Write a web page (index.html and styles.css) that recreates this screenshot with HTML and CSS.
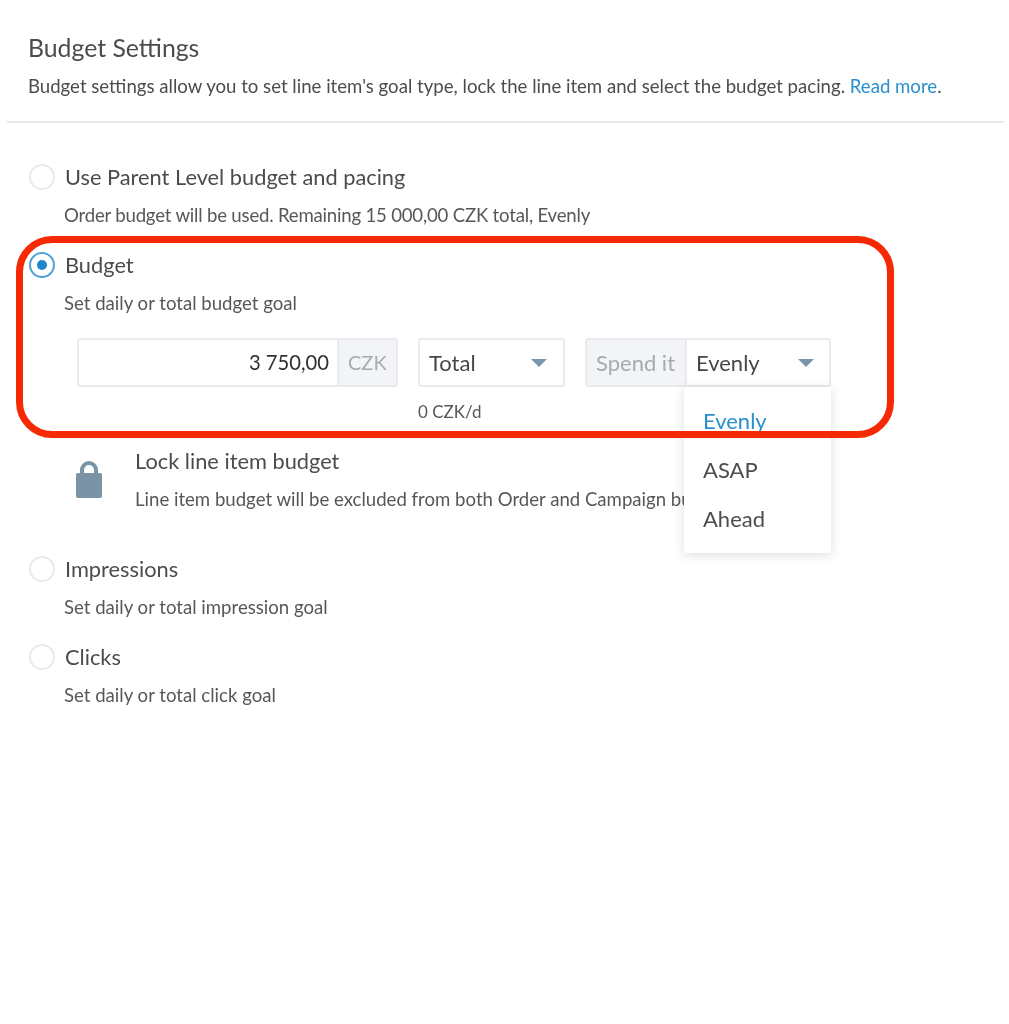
FILE: index.html
```html
<!DOCTYPE html>
<html lang="en">
<head>
<meta charset="utf-8">
<title>Budget Settings</title>
<link rel="stylesheet" href="styles.css">
</head>
<body>
<main class="page">
  <header class="head">
    <h1 class="title">Budget Settings</h1>
    <p class="intro">Budget settings allow you to set line item's goal type, lock the line item and select the budget pacing. <a class="link" href="#">Read more</a>.</p>
  </header>
  <section class="options">
    <div class="option">
      <span class="radio"></span>
      <div class="label">Use Parent Level budget and pacing</div>
      <div class="desc desc-tight">Order budget will be used. Remaining 15 000,00 CZK total, Evenly</div>
    </div>
    <div class="option">
      <span class="radio radio-on"></span>
      <div class="label">Budget</div>
      <div class="desc">Set daily or total budget goal</div>
    </div>
    <div class="controls">
      <div class="group group-amount">
        <div class="field field-amount">3 750,00</div>
        <div class="addon addon-right">CZK</div>
      </div>
      <div class="col-total">
        <div class="select select-total"><span>Total</span><svg class="caret" width="16" height="8" viewBox="0 0 16 8"><path d="M0 0h16L8 8z"/></svg></div>
        <div class="rate">0 CZK/d</div>
      </div>
      <div class="group group-spend">
        <div class="addon addon-left">Spend it</div>
        <div class="select select-pacing"><span>Evenly</span><svg class="caret" width="16" height="8" viewBox="0 0 16 8"><path d="M0 0h16L8 8z"/></svg></div>
      </div>
    </div>
    <div class="lock-row">
      <svg class="lock" width="26" height="37" viewBox="0 0 26 37"><path fill-rule="evenodd" d="M4 13V9a9 9 0 0 1 18 0v4h-4V9a5 5 0 0 0-10 0v4z"/><rect x="0" y="12" width="26" height="25" rx="2"/></svg>
      <div class="lock-text">
        <div class="label">Lock line item budget</div>
        <div class="desc">Line item budget will be excluded from both Order and Campaign budgets</div>
      </div>
    </div>
    <div class="option">
      <span class="radio"></span>
      <div class="label">Impressions</div>
      <div class="desc">Set daily or total impression goal</div>
    </div>
    <div class="option">
      <span class="radio"></span>
      <div class="label">Clicks</div>
      <div class="desc">Set daily or total click goal</div>
    </div>
  </section>
</main>
<ul class="menu">
  <li class="menu-item menu-active">Evenly</li>
  <li class="menu-item">ASAP</li>
  <li class="menu-item">Ahead</li>
</ul>
<div class="highlight"></div>
</body>
</html>
```
FILE: styles.css
```css
* { box-sizing: border-box; }
html, body { margin: 0; padding: 0; background: #fff; }
body {
  position: relative;
  height: 1024px;
  overflow: hidden;
  font-family: "Lato", "Liberation Sans", sans-serif;
  color: #4a4d50;
  filter: blur(0.4px);
}
.page { padding: 0 5px 0 7px; }
.head {
  height: 123px;
  padding: 29px 0 0 21px;
  border-bottom: 2px solid #e6e8ea;
}
.title {
  margin: 0;
  font-size: 24.8px;
  line-height: 38px;
  font-weight: 400;
  color: #4a4d50;
}
.intro {
  margin: 0;
  font-size: 18.6px;
  line-height: 38px;
  white-space: nowrap;
  color: #4a4d50;
}
.link { color: #2a8fce; text-decoration: none; }
.options { padding: 35px 0 0 23px; }
.option {
  position: relative;
  height: 88px;
  padding-left: 35px;
}
.radio {
  position: absolute;
  left: -1px;
  top: 6px;
  width: 26px;
  height: 26px;
  border: 2px solid #e8eaec;
  border-radius: 50%;
  background: #fff;
}
.radio-on { border-color: #4ea3d8; }
.radio-on::after {
  content: "";
  position: absolute;
  left: 6px;
  top: 6px;
  width: 10px;
  height: 10px;
  border-radius: 50%;
  background: #1f86cc;
}
.label { font-size: 21.8px; line-height: 38px; color: #4a4d50; }
.desc { font-size: 18.6px; line-height: 38px; color: #55585b; margin-left: -1px; white-space: nowrap; }
.desc-tight { letter-spacing: -0.2px; }
.controls {
  display: flex;
  align-items: flex-start;
  gap: 20px;
  height: 104px;
  margin: 4px 0 0 47px;
  font-size: 22px;
}
.group { display: flex; height: 49px; }
.group-amount { width: 321px; }
.group-spend { width: 246px; }
.field, .addon, .select {
  height: 49px;
  line-height: 45px;
  border: 2px solid #e9ebef;
}
.field-amount {
  flex: 1;
  padding-right: 8px;
  font-size: 20.2px;
  text-align: right;
  color: #2e3134;
  border-right: 0;
  border-radius: 3px 0 0 3px;
}
.addon { background: #f2f4f7; color: #a6abb0; }
.addon-right { width: 61px; padding-left: 9px; font-size: 20px; border-radius: 0 3px 3px 0; }
.addon-left { width: 100px; padding-left: 9px; border-right: 0; border-radius: 3px 0 0 3px; white-space: nowrap; }
.select {
  display: flex;
  align-items: center;
  justify-content: space-between;
  padding: 0 16px 0 9px;
  color: #45484b;
}
.select-total { width: 147px; border-radius: 3px; }
.select-pacing { width: 146px; padding-right: 15px; border-radius: 0 3px 3px 0; }
.col-total { width: 147px; }
.rate { margin-top: 6px; font-size: 17px; line-height: 38px; color: #55585b; }
.caret { fill: #7a96a8; }
.lock-row {
  display: flex;
  height: 108px;
  margin-left: 34px;
}
.lock { margin: 19px 0 0 12px; fill: #7a94a6; flex: none; }
.lock-text { margin-left: 33px; }
.lock-text .desc { margin-left: 0; }
.menu {
  position: absolute;
  left: 684px;
  top: 387px;
  width: 147px;
  height: 166px;
  margin: 0;
  padding: 9px 0 0 19px;
  list-style: none;
  background: #fff;
  box-shadow: 0 2px 10px rgba(40, 50, 60, 0.16);
}
.menu-item { height: 49px; line-height: 49px; font-size: 22px; color: #4a4d50; }
.menu-active { color: #2a8fce; }
.highlight {
  position: absolute;
  left: 16px;
  top: 236px;
  width: 878px;
  height: 202px;
  border: 7px solid #f52a05;
  border-radius: 36px;
}
```
